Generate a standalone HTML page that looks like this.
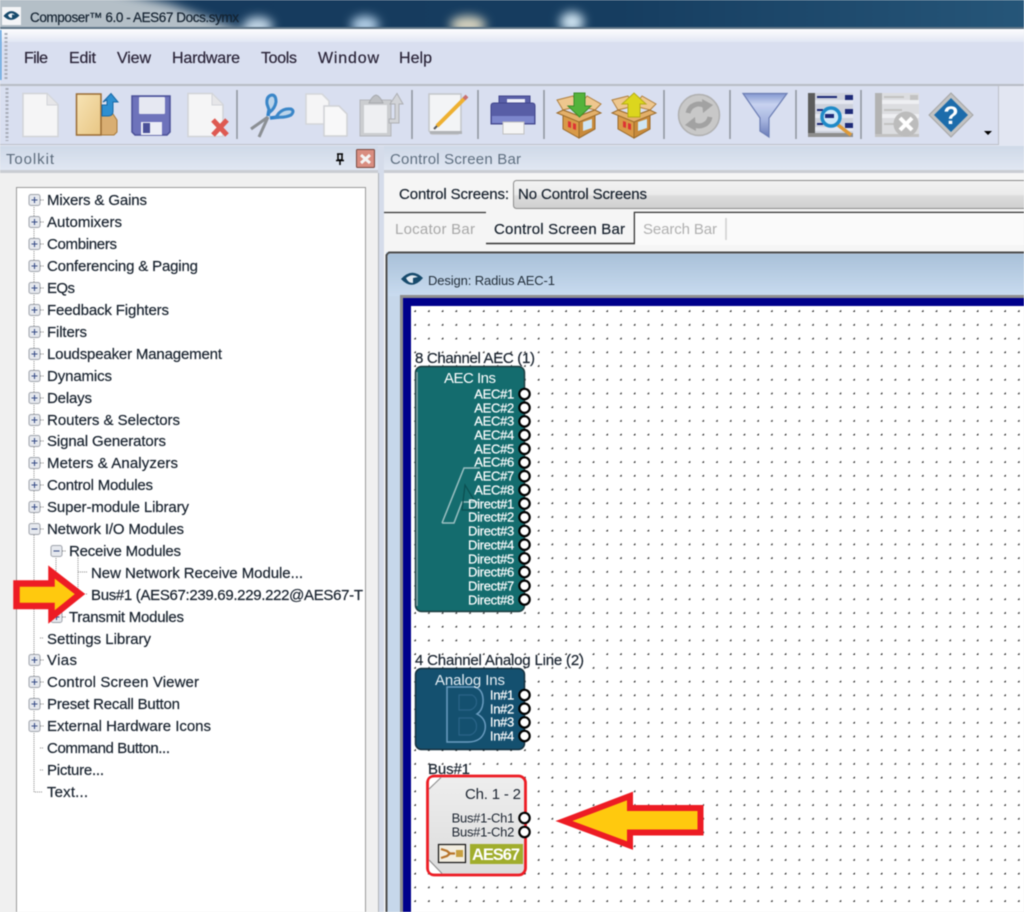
<!DOCTYPE html>
<html><head><meta charset="utf-8"><title>Composer</title>
<style>
html,body{margin:0;padding:0;background:#f0f0f0;width:1024px;height:912px;overflow:hidden}
svg{display:block;filter:blur(.5px)}
text{font-family:"Liberation Sans",sans-serif;white-space:pre}
.tree text{font-size:15px;fill:#18222e;stroke:#18222e;stroke-width:.2px}
.m text{font-size:16px;fill:#2a2438;stroke:#2a2438;stroke-width:.2px}
.lab text{font-size:13px;letter-spacing:-.3px;fill:#fff;stroke:#fff;stroke-width:.2px;text-anchor:end}
.d{stroke:#18222e;stroke-width:.2px;fill:#18222e;font-size:15px}
.port circle{fill:#fff;stroke:#000;stroke-width:2.2}
</style></head><body>
<svg width="1024" height="912" viewBox="0 0 1024 912" xmlns="http://www.w3.org/2000/svg">
<defs>
<linearGradient id="tb" x1="0" x2="1" y1="0" y2="0"><stop offset="0" stop-color="#16395c"/><stop offset=".6" stop-color="#163d60"/><stop offset="1" stop-color="#265679"/></linearGradient>
<linearGradient id="hdr" x1="0" x2="0" y1="0" y2="1"><stop offset="0" stop-color="#cfd9e8"/><stop offset="1" stop-color="#e2e8f3"/></linearGradient>
<linearGradient id="combo" x1="0" x2="0" y1="0" y2="1"><stop offset="0" stop-color="#f2f2f2"/><stop offset=".5" stop-color="#ebebeb"/><stop offset=".55" stop-color="#dcdcdc"/><stop offset="1" stop-color="#cfcfcf"/></linearGradient>
<linearGradient id="win" x1="0" x2="0" y1="0" y2="1"><stop offset="0" stop-color="#a9c1d9"/><stop offset="1" stop-color="#c9dbef"/></linearGradient>
<linearGradient id="menu" x1="0" x2="0" y1="0" y2="1"><stop offset="0" stop-color="#fdfdfe"/><stop offset="1" stop-color="#e2e7f4"/></linearGradient>
<linearGradient id="fold" x1="0" x2="1" y1="0" y2="1"><stop offset="0" stop-color="#f7e3b4"/><stop offset="1" stop-color="#e8c684"/></linearGradient>
<linearGradient id="fun" x1="0" x2="0" y1="0" y2="1"><stop offset="0" stop-color="#8498d0"/><stop offset=".25" stop-color="#c8d3f0"/><stop offset=".6" stop-color="#a8b6e0"/><stop offset="1" stop-color="#6a7cb8"/></linearGradient>
<linearGradient id="mod" x1="0" x2="0" y1="0" y2="1"><stop offset="0" stop-color="#eeeeee"/><stop offset="1" stop-color="#dcdcdc"/></linearGradient>
<pattern id="dots" x="415" y="311" width="13.72" height="13.72" patternUnits="userSpaceOnUse"><rect x="-.8" y="-.8" width="1.700" height="1.700" fill="#111"/><rect x="12.920" y="-.8" width=".8" height="1.700" fill="#111"/><rect x="-.8" y="12.920" width="1.700" height=".8" fill="#111"/></pattern>
<filter id="bl" x="-50%" y="-50%" width="200%" height="200%"><feGaussianBlur stdDeviation="5"/></filter>
<g id="p"><rect x="-5.500" y="-5.500" width="11" height="11" rx="2" fill="#e6e9ee" stroke="#a0a4ac"/><path d="M-3 0H3M0-3V3" stroke="#3a4f88" stroke-width="1.100"/><path d="M6 0H9" stroke="#777" stroke-dasharray="1 1"/></g>
<g id="n"><rect x="-5.500" y="-5.500" width="11" height="11" rx="2" fill="#e6e9ee" stroke="#a0a4ac"/><path d="M-3 0H3" stroke="#3a4f88" stroke-width="1.100"/><path d="M6 0H9" stroke="#777" stroke-dasharray="1 1"/></g>
<path id="doc" d="M0 0H24L35 11V43H0Z" fill="#f5f5f6" stroke="#d2d4d8" stroke-width="1.500"/>
<g id="box"><path d="M-16 8L0 14 16 8V27L0 36-16 27Z" fill="#d89a48" stroke="#9a6a2a"/><path d="M0 14V36L16 27V8Z" fill="#c88a3a" stroke="#9a6a2a"/><path d="M-16 8L-22 -2-6-6 0 4ZM16 8L22 2 8-6 0 4Z" fill="#eec78e" stroke="#b08040"/><path d="M-22 11L-16 8 0 14 16 8 22 11 0 20Z" fill="#e3b06a" stroke="#9a6a2a"/><path d="M4 20L13 17V26L4 29Z" fill="#cfe6f4"/><path d="M-11 19l3 1v6l-3-1zM-6 21l3 1v6l-3-1z" fill="#d33"/></g>
</defs>

<!-- title bar -->
<rect width="1024" height="28" fill="url(#tb)"/>
<g filter="url(#bl)">
<path d="M-20-10H110L170 4 262 38H-20Z" fill="#b4bfc7"/>
<ellipse cx="258" cy="26" rx="15" ry="9" fill="#c4d8e8"/><ellipse cx="365" cy="25" rx="14" ry="9" fill="#b4d0e8"/><ellipse cx="468" cy="25" rx="18" ry="9" fill="#d8d4c0"/><ellipse cx="572" cy="22" rx="12" ry="10" fill="#cfe4f2"/>
</g>
<rect y="27" width="1024" height="2" fill="#5e7486"/>
<rect x="2" y="7" width="19" height="18" fill="#f4f5f7"/>
<path d="M3.500 16Q11 6.500 19.500 15.500Q11 24 3.500 16Z" fill="#174a6c"/><path d="M8 15Q11.500 11.500 15 15L12 14.500 12 18Q9 18 8 15Z" fill="#f0f4f8"/>
<text x="30" y="22" font-size="13.500" fill="#142230" stroke="#142230" stroke-width=".2" textLength="209">Composer™ 6.0 - AES67 Docs.symx</text>

<!-- menu -->
<rect y="29" width="1024" height="13" fill="url(#menu)"/>
<rect y="42" width="1024" height="42" fill="#d9dff0"/>
<rect y="84" width="1024" height="2" fill="#b8bcc4"/>
<path d="M6 33V80" stroke="#a8adb8" stroke-width="3" stroke-dasharray="2 2"/>
<rect y="30" width="1.500" height="50" fill="#5aa0e0"/>
<g class="m">
<text x="24" y="63" textLength="24">File</text><text x="69" y="63" textLength="27">Edit</text><text x="117" y="63" textLength="34">View</text><text x="172" y="63" textLength="68">Hardware</text><text x="261" y="63" textLength="36">Tools</text><text x="318" y="63" textLength="61">Window</text><text x="399" y="63" textLength="33">Help</text>
</g>

<!-- toolbar -->
<rect y="86" width="1024" height="60" fill="#e2e6f2"/>
<rect y="86" width="998" height="58" fill="#d9dff0"/>
<path d="M998.500 85V145M0 144.500H998" stroke="#bcc0c8"/>
<path d="M7 88V141" stroke="#a8adb8" stroke-width="3" stroke-dasharray="2 2"/>
<g stroke="#8f949c" stroke-width="1.500"><path d="M237 90V139M412 90V139M478 90V139M544 90V139M664 90V139M730 90V139M796 90V139M861 90V139"/></g>

<use href="#doc" x="23" y="93.500"/><path d="M47 94V105H58" fill="#e6e6e8" stroke="#d2d4d8"/>

<path d="M101 114H113L117 120V132L114 135H101Z" fill="#d9ae72" stroke="#a87a3a"/>
<path d="M76.500 94H101V135H76.500Z" fill="url(#fold)" stroke="#9a6c34" stroke-width="1.500"/>
<path d="M102 116V105H107V100L103 102 111 93.500 118 102H113V111Q113 116 108 116Z" fill="#2f8fd0" stroke="#1a6aa8"/>

<path d="M132 96H170V132L167 135H135L132 132Z" fill="#6e73bb" stroke="#4a5098" stroke-width="1.500"/>
<rect x="139" y="97" width="26" height="17" rx="1" fill="#e6e8f2"/>
<rect x="141" y="122" width="21" height="13" fill="#eceef6"/><rect x="143" y="123" width="7" height="10" fill="#4a5098"/>

<use href="#doc" x="188" y="93.500"/><path d="M212 94V105H223" fill="#e6e6e8" stroke="#d2d4d8"/>
<path d="M213 120L227 135M227 120L213 135" stroke="#de5a52" stroke-width="5"/>

<g fill="none">
<path d="M268 117L251 129M268 117L259 137" stroke="#8b8f94" stroke-width="3"/>
<path d="M268 116L269 110M270 118L279 117" stroke="#2f80c8" stroke-width="3.500"/>
<path d="M272 95Q266 96 267 104Q269 110 270 112Q275 108 276 102Q276 95 272 95Z" stroke="#3a86c8" stroke-width="3" fill="#bcd4ea"/>
<path d="M276 117Q285 118 291 115Q295 111 291 109Q284 108 279 113Z" stroke="#3a86c8" stroke-width="3" fill="#bcd4ea"/>
</g>

<path d="M306 94H322L329 101V124H306Z" fill="#f5f5f6" stroke="#d4d6da" stroke-width="1.500"/>
<path d="M324 106H339L347 114V136H324Z" fill="#f8f8f9" stroke="#cfd1d5" stroke-width="1.500"/>

<path d="M360 100H391V136H360Z" fill="#cbcdd0" stroke="#b4b6ba"/><rect x="364" y="105" width="23" height="28" fill="#eeeff2"/><path d="M369 103Q372 96 376 95Q380 96 383 103Z" fill="#bdbfc3" stroke="#a8aaae"/>
<path d="M389 119H395V104H390L397 93.500 403 104H399V123H389Z" fill="#d2d4d8" stroke="#aeb0b4"/>

<path d="M429 94H461V131L458 134H432L429 131Z" fill="#f3f4f6" stroke="#c4c6ca" stroke-width="1.500"/>
<rect x="430" y="131" width="32" height="3" fill="#b0b2b6"/>
<path d="M437 126L465 98" stroke="#eeb030" stroke-width="4"/><path d="M464 99L467 96" stroke="#c87070" stroke-width="4"/><path d="M437 126L434 129" stroke="#555" stroke-width="2"/>

<path d="M499 96H530V108H499Z" fill="#5a60a8" stroke="#41468c"/><rect x="507" y="99" width="18" height="6" fill="#eceef8"/>
<path d="M491 106Q491 103 494 103H532Q535 103 535 106V124H491Z" fill="#585ea6" stroke="#41468c"/><rect x="492" y="116" width="42" height="7" fill="#7c86cc"/>
<rect x="503" y="122" width="21" height="12" fill="#f5f5f5" stroke="#c0c0c0"/>

<use href="#box" x="579" y="102"/>
<path d="M574 93H585V106H591L579.500 117 568 106H574Z" fill="#54b33c" stroke="#3b8d2a"/>
<use href="#box" x="634" y="102"/>
<path d="M628 117V104H622L634 93 646 104H640V117Z" fill="#dcd61e" stroke="#b5ac18"/>

<circle cx="699" cy="115" r="20.500" fill="#c8c8c8" stroke="#b0b0b0" stroke-width="1.500"/>
<g fill="none" stroke="#a2a2a2" stroke-width="5"><path d="M688 113A11 11 0 0 1 705 106"/><path d="M710 117A11 11 0 0 1 693 124"/></g>
<path d="M702 99L713 105 703 113ZM696 131L685 125 695 117Z" fill="#a2a2a2"/>

<path d="M743 93.500H787L769 118V137L760 131V118Z" fill="url(#fun)" stroke="#6c7eb4" stroke-width="1.200"/>

<rect x="808" y="93" width="45" height="44" fill="#cdd1dc"/><rect x="808" y="93" width="7" height="44" fill="#5c5c5c"/><rect x="808" y="133" width="45" height="4" fill="#8e8e8e"/>
<g fill="#e4e7f0"><rect x="815" y="100" width="38" height="4"/><rect x="815" y="114" width="38" height="4"/><rect x="815" y="127" width="38" height="4"/></g>
<g fill="#1e2a78"><rect x="817" y="96" width="20" height="2"/><rect x="845" y="95" width="8" height="5"/><rect x="845" y="109" width="8" height="5"/><rect x="845" y="123" width="8" height="5"/><rect x="817" y="109" width="6" height="2"/><rect x="817" y="123" width="6" height="2"/></g>
<path d="M838 125L851 135" stroke="#dd9a3a" stroke-width="3.500"/>
<circle cx="831" cy="117" r="9" fill="#cfe8f8" stroke="#1f8ac8" stroke-width="3.500"/><rect x="825" y="114" width="9" height="4" fill="#1e2a78"/>

<rect x="875" y="93" width="44" height="44" fill="#dcdde0"/><rect x="875" y="93" width="7" height="44" fill="#b2b2b2"/><rect x="875" y="134" width="44" height="3" fill="#c2c2c2"/>
<g fill="#eeeff2"><rect x="882" y="100" width="37" height="4"/><rect x="882" y="114" width="37" height="4"/></g>
<g fill="#c2c2c2"><rect x="884" y="96" width="20" height="2"/><rect x="910" y="95" width="8" height="5"/><rect x="884" y="109" width="18" height="2"/><rect x="884" y="123" width="14" height="2"/></g>
<circle cx="906" cy="124" r="12.500" fill="#bcbcbc"/><path d="M900 118L912 130M912 118L900 130" stroke="#fff" stroke-width="4"/>

<path d="M951 93L973 115 951 137 929 115Z" fill="#c2c2c2" stroke="#a5a5a5"/>
<path d="M951 98L968 115 951 132 934 115Z" fill="#1c6cab"/>
<text x="951" y="124" font-size="25" font-weight="bold" fill="#fff" text-anchor="middle">?</text>
<path d="M984 131H992L988 135Z" fill="#000"/>

<!-- dock headers -->
<rect y="146" width="1024" height="26" fill="url(#hdr)"/>
<rect y="170" width="1024" height="3" fill="#c9ccd2"/>
<text x="6" y="164" font-size="15" fill="#5c6b7c" textLength="48">Toolkit</text>
<path d="M337 154H343M338 154V160H342V154M336 160.500H344M340 161V165" stroke="#000" stroke-width="1.500" fill="none"/>
<rect x="356.500" y="149.500" width="18" height="18" rx="1" fill="#d98d80" stroke="#7a4a40"/><path d="M361 155L370 163M370 155L361 163" stroke="#f4f4f4" stroke-width="3"/>
<text x="390" y="164" font-size="15" fill="#5f6f80" textLength="131">Control Screen Bar</text>

<!-- left panel -->
<rect y="173" width="378" height="739" fill="#f0f0f0"/>
<rect x="16.500" y="187.500" width="349" height="730" fill="#fff" stroke="#9a9a9a"/>
<rect x="378" y="146" width="6" height="766" fill="#d5dcea"/>
<rect x="378" y="173" width="1" height="739" fill="#aeb2b8"/>

<!-- tree lines -->
<g fill="none" stroke="#8a8a8a" stroke-dasharray="1 1">
<path d="M34 205V792H43M56 556V618M78 556V594M78 572H88M78 594H88M40 638H44M40 748H44M40 770H44"/>
</g>
<use href="#p" x="34.500" y="200"/><use href="#p" x="34.500" y="222"/><use href="#p" x="34.500" y="244"/><use href="#p" x="34.500" y="266"/><use href="#p" x="34.500" y="288"/><use href="#p" x="34.500" y="310"/><use href="#p" x="34.500" y="332"/><use href="#p" x="34.500" y="354"/><use href="#p" x="34.500" y="376"/><use href="#p" x="34.500" y="398"/><use href="#p" x="34.500" y="420"/><use href="#p" x="34.500" y="441"/><use href="#p" x="34.500" y="463"/><use href="#p" x="34.500" y="485"/><use href="#p" x="34.500" y="507"/><use href="#n" x="34.500" y="529"/><use href="#n" x="56.500" y="551"/><use href="#p" x="56.500" y="617"/><use href="#p" x="34.500" y="660"/><use href="#p" x="34.500" y="682"/><use href="#p" x="34.500" y="704"/><use href="#p" x="34.500" y="726"/>

<g class="tree">
<text x="47" y="205" textLength="100">Mixers &amp; Gains</text>
<text x="47" y="227" textLength="75">Automixers</text>
<text x="47" y="249" textLength="70">Combiners</text>
<text x="47" y="271" textLength="151">Conferencing &amp; Paging</text>
<text x="47" y="293" textLength="28">EQs</text>
<text x="47" y="315" textLength="122">Feedback Fighters</text>
<text x="47" y="337" textLength="40">Filters</text>
<text x="47" y="359" textLength="175">Loudspeaker Management</text>
<text x="47" y="381" textLength="65">Dynamics</text>
<text x="47" y="403" textLength="45">Delays</text>
<text x="47" y="425" textLength="133">Routers &amp; Selectors</text>
<text x="47" y="446" textLength="119">Signal Generators</text>
<text x="47" y="468" textLength="131">Meters &amp; Analyzers</text>
<text x="47" y="490" textLength="106">Control Modules</text>
<text x="47" y="512" textLength="142">Super-module Library</text>
<text x="47" y="534" textLength="137">Network I/O Modules</text>
<text x="69" y="556" textLength="112">Receive Modules</text>
<text x="91" y="578" textLength="212">New Network Receive Module...</text>
<text x="91" y="600" textLength="272">Bus#1 (AES67:239.69.229.222@AES67-T</text>
<text x="69" y="622" textLength="115">Transmit Modules</text>
<text x="47" y="644" textLength="104">Settings Library</text>
<text x="47" y="665" textLength="30">Vias</text>
<text x="47" y="687" textLength="152">Control Screen Viewer</text>
<text x="47" y="709" textLength="133">Preset Recall Button</text>
<text x="47" y="731" textLength="164">External Hardware Icons</text>
<text x="47" y="753" textLength="123">Command Button...</text>
<text x="47" y="775" textLength="57">Picture...</text>
<text x="47" y="797" textLength="41">Text...</text>
</g>

<!-- left arrow -->
<path d="M16.500 583.500H51.500V572L80 594 51.500 617V606H16.500Z" fill="#ffc90e" stroke="#ed1c24" stroke-width="6.500" stroke-linejoin="miter"/>

<!-- right panel -->
<rect x="384" y="173" width="640" height="739" fill="#f5f5f5"/>
<path d="M384 212.500H486" stroke="#333" stroke-width="1.200"/>
<path d="M486 243.500H634.500V212.500H1024" fill="none" stroke="#333" stroke-width="1.500"/>
<rect x="635" y="213" width="389" height="32" fill="#fafafa"/>
<text class="d" x="399" y="199" textLength="110">Control Screens:</text>
<rect x="513.500" y="180.500" width="520" height="28" rx="3" fill="url(#combo)" stroke="#8c8c8c"/>
<text class="d" x="518" y="199" textLength="129">No Control Screens</text>
<text x="395" y="234" font-size="15" fill="#a8a8a8" textLength="80">Locator Bar</text>
<text class="d" x="494" y="234" textLength="131">Control Screen Bar</text>
<text x="643" y="234" font-size="15" fill="#b0b0b0" textLength="74">Search Bar</text>
<path d="M726 218V240" stroke="#cfcfcf" stroke-width="1.500"/>

<!-- design window -->
<rect x="386" y="252" width="650" height="670" fill="#c6d7ea"/>
<path d="M386.500 912V255L389 252.500H1024" fill="none" stroke="#4c4c4c" stroke-width="2"/>
<rect x="388" y="254" width="636" height="42" fill="url(#win)"/>
<path d="M401 279Q412 267 423 278Q412 291 401 279Z" fill="#174a6c"/><path d="M406 278Q412 273 418 277L413 278 413 283Q408 283 406 278Z" fill="#dfe8f0"/>
<text x="428" y="285" font-size="13" fill="#24303c" textLength="127">Design: Radius AEC-1</text>
<rect x="400" y="295" width="624" height="617" fill="#8f8f8f"/>
<rect x="403" y="298" width="621" height="614" fill="#00008b"/>
<rect x="411" y="306" width="613" height="606" fill="#fff"/>
<rect x="411" y="306" width="613" height="606" fill="url(#dots)"/>

<!-- AEC -->
<text class="d" x="415" y="363" textLength="120">8 Channel AEC (1)</text>
<rect x="415.500" y="366.500" width="109" height="245" rx="6" fill="#146c6e" stroke="#1d3d40" stroke-width="1.500"/>
<path d="M417 372V606" stroke="#8aa8a9" stroke-width="1.500"/>
<path d="M442 523L464 468H480M442 523H454L462 502H478" fill="none" stroke="#9cc0c2" stroke-width="1.500"/>
<path d="M465 485L480 510H462Z" fill="none" stroke="#0b4e50" stroke-width="1.200"/>
<text x="470" y="383" font-size="15" fill="#fff" text-anchor="middle" textLength="52">AEC Ins</text>
<g class="lab">
<text x="514" y="398.500">AEC#1</text><text x="514" y="412.500">AEC#2</text><text x="514" y="425.500">AEC#3</text><text x="514" y="439.500">AEC#4</text><text x="514" y="453.500">AEC#5</text><text x="514" y="466.500">AEC#6</text><text x="514" y="480.500">AEC#7</text><text x="514" y="494.500">AEC#8</text>
<text x="514" y="508.500">Direct#1</text><text x="514" y="521.500">Direct#2</text><text x="514" y="535.500">Direct#3</text><text x="514" y="549.500">Direct#4</text><text x="514" y="563.500">Direct#5</text><text x="514" y="576.500">Direct#6</text><text x="514" y="590.500">Direct#7</text><text x="514" y="604.500">Direct#8</text>
</g>
<g class="port">
<circle cx="524.500" cy="394" r="5.200"/><circle cx="524.500" cy="407.700" r="5.200"/><circle cx="524.500" cy="421.400" r="5.200"/><circle cx="524.500" cy="435.100" r="5.200"/><circle cx="524.500" cy="448.800" r="5.200"/><circle cx="524.500" cy="462.500" r="5.200"/><circle cx="524.500" cy="476.200" r="5.200"/><circle cx="524.500" cy="489.900" r="5.200"/><circle cx="524.500" cy="503.600" r="5.200"/><circle cx="524.500" cy="517.300" r="5.200"/><circle cx="524.500" cy="531" r="5.200"/><circle cx="524.500" cy="544.700" r="5.200"/><circle cx="524.500" cy="558.400" r="5.200"/><circle cx="524.500" cy="572.100" r="5.200"/><circle cx="524.500" cy="585.800" r="5.200"/><circle cx="524.500" cy="599.500" r="5.200"/>
</g>

<!-- Analog -->
<text class="d" x="415" y="665" textLength="169">4 Channel Analog Line (2)</text>
<rect x="415.500" y="668.500" width="109" height="81" rx="6" fill="#14506f" stroke="#14303f" stroke-width="1.500"/>
<path d="M447 687H474Q484 689 483 703Q482 711 477 714Q487 719 485 730Q482 742 468 742H447Z" fill="none" stroke="#6a9cc0" stroke-width="1.500"/>
<path d="M459 695H472Q478 698 476 705Q474 709 470 710H459ZM459 718H472Q478 722 476 730Q474 734 470 735H459Z" fill="none" stroke="#2a6488" stroke-width="1.200"/>
<text x="470" y="685" font-size="15" fill="#e6eef4" text-anchor="middle" textLength="70">Analog Ins</text>
<g class="lab">
<text x="514" y="699.500">In#1</text><text x="514" y="713.500">In#2</text><text x="514" y="726.500">In#3</text><text x="514" y="740.500">In#4</text>
</g>
<g class="port"><circle cx="524.500" cy="695" r="5.200"/><circle cx="524.500" cy="708.700" r="5.200"/><circle cx="524.500" cy="722.400" r="5.200"/><circle cx="524.500" cy="736" r="5.200"/></g>

<!-- Bus -->
<text class="d" x="428" y="774" textLength="42">Bus#1</text>
<rect x="427.500" y="776" width="98" height="99" rx="7" fill="url(#mod)" stroke="#ed1c24" stroke-width="2.800"/>
<path d="M429 789V782Q429 777.500 434 777.500H441ZM429 860V868Q429 873.500 434 873.500H442Z" fill="#fff"/>
<path d="M429 789L441 777.500M429 860L442 873.500" stroke="#888" stroke-width="1"/>
<text x="521" y="799" font-size="15" fill="#1c2430" text-anchor="end" textLength="56">Ch. 1 - 2</text>
<text x="514" y="822.500" font-size="13" letter-spacing="-.3" fill="#1c2430" text-anchor="end">Bus#1-Ch1</text>
<text x="514" y="836.500" font-size="13" letter-spacing="-.3" fill="#1c2430" text-anchor="end">Bus#1-Ch2</text>
<g class="port"><circle cx="524.500" cy="818" r="5.200"/><circle cx="524.500" cy="832" r="5.200"/></g>
<rect x="438.500" y="844.500" width="27" height="18" fill="#f2ede0" stroke="#111" stroke-width="1.200"/>
<path d="M441 849L447 851 450 853.500 447 856 441 858M448 853.500H455" fill="none" stroke="#b8742a" stroke-width="2.200"/><rect x="456" y="850" width="7" height="7" fill="#c8a040"/>
<rect x="470" y="844" width="53" height="20" fill="#a0ad2c"/>
<text x="496" y="860" font-size="16.500" font-weight="bold" fill="#fff" text-anchor="middle" textLength="48">AES67</text>

<!-- right arrow -->
<path d="M564 821L630 796V808H700.500V832.500H630V845.500Z" fill="#ffc90e" stroke="#ed1c24" stroke-width="6" stroke-linejoin="miter"/>
</svg>
</body></html>
